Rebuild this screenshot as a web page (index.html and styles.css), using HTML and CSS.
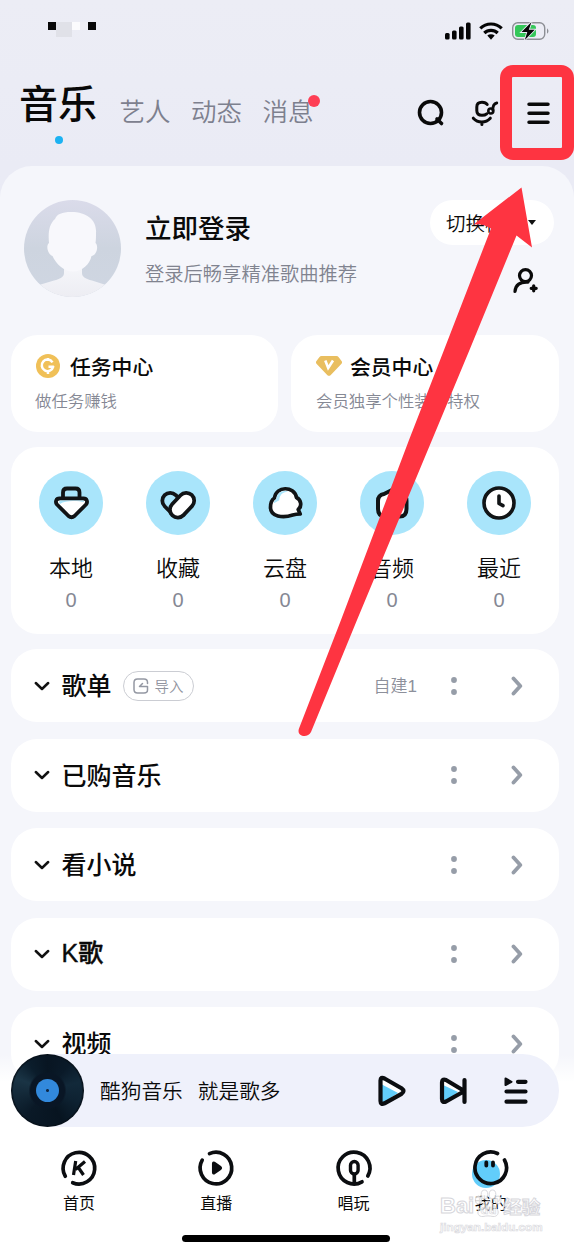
FILE: index.html
```html
<!DOCTYPE html>
<html lang="zh-CN">
<head>
<meta charset="utf-8">
<title>音乐</title>
<link rel="stylesheet" href="styles.css">
</head>
<body>
<svg class="defs" width="0" height="0">
  <symbol id="down" viewBox="0 0 16 10"><path d="M1.800 2 8 8l6.200-6" fill="none" stroke="#111" stroke-width="2.500" stroke-linecap="round" stroke-linejoin="round"/></symbol>
  <symbol id="more" viewBox="0 0 8 20"><circle cx="4" cy="4" r="2.900"/><circle cx="4" cy="16" r="2.900"/></symbol>
  <symbol id="next" viewBox="0 0 12 20"><path d="M2.500 2.500 9.300 10l-6.800 7.500" fill="none" stroke="#969da8" stroke-width="3.800" stroke-linecap="round" stroke-linejoin="round"/></symbol>
</svg>
<div class="phone">
  <div class="status">
    <div class="mosaic"><i class="blk"></i><i class="gry"></i><i class="wht"></i><i class="pale"></i><i class="blk"></i></div>
    <svg class="status-icons" width="106" height="20" viewBox="0 0 106 20">
      <g fill="#050505"><rect x="0" y="12" width="4.600" height="6.500" rx="1.500"/><rect x="7" y="9.500" width="4.600" height="9" rx="1.500"/><rect x="14" y="5.500" width="4.600" height="13" rx="1.500"/><rect x="21" y="1.500" width="4.600" height="17" rx="1.500"/></g>
      <g fill="none" stroke="#050505" stroke-width="3.200"><path d="M35.300 7.300a15.500 15.500 0 0 1 21.400 0"/><path d="M39.300 12a9.600 9.600 0 0 1 13.400 0"/></g>
      <path d="M42.300 14.600a5.500 5.500 0 0 1 7.400 0L46 18.800z" fill="#050505"/>
      <rect x="67.700" y="1.700" width="32" height="16.600" rx="5" fill="none" stroke="#8d8f95" stroke-width="1.400"/>
      <rect x="70" y="4" width="21" height="12" rx="3" fill="#34c759"/>
      <path d="M102 7.200q3 2.800 0 5.600z" fill="#8d8f95"/>
      <path d="M86.500 1 76.500 11h5.800l-2.500 8L89.700 8.700h-5.900z" fill="#050505" stroke="#ebecf5" stroke-width="1.800" paint-order="stroke"/>
    </svg>
  </div>
  <header class="header">
    <nav class="tabs">
      <a class="tab active">音乐<i class="under"></i></a>
      <a class="tab">艺人</a>
      <a class="tab">动态</a>
      <a class="tab">消息<i class="badge"></i></a>
    </nav>
    <div class="tools">
      <svg width="30" height="30" viewBox="0 0 30 30" fill="none" stroke="#0a0a0a" stroke-width="3.600" stroke-linecap="round"><circle cx="15.500" cy="14.500" r="11"/><path d="m22 21 4.500 4.500"/></svg>
      <svg width="30" height="30" viewBox="0 0 30 30" fill="none" stroke="#0a0a0a" stroke-width="3" stroke-linecap="round" stroke-linejoin="round"><path d="M18.200 6.500C17 4.500 15 4.200 13 4.200Q7.800 4.200 7.800 9v3.500q0 4.800 5.200 4.800 3 0 4.700-1.500"/><path d="M4.300 20.200c4.500 5 12.500 5 17 0M12.900 24.500v2"/><circle cx="21.800" cy="13" r="2.500" stroke-width="2.600"/><path d="M23.900 12.500c-.2-4 .6-6.900 3.900-7.500" stroke-width="2.800"/></svg>
      <svg width="30" height="30" viewBox="0 0 30 30" stroke="#0a0a0a" stroke-width="3.500" stroke-linecap="round"><path d="M6 6.200h19M6 15.200h19M6 24.200h19"/></svg>
    </div>
  </header>
  <main class="sheet">
    <section class="profile">
      <svg class="avatar" width="97" height="97" viewBox="0 0 97 97">
        <defs><linearGradient id="av" x2="0" y2="1"><stop stop-color="#dadbea"/><stop offset=".5" stop-color="#cdd4df"/><stop offset="1" stop-color="#cfd6e2"/></linearGradient><linearGradient id="bd" x2="0" y2="1"><stop stop-color="#f5f6fa"/><stop offset="1" stop-color="#ececf2"/></linearGradient><clipPath id="ac"><circle cx="48.500" cy="48.500" r="48.500"/></clipPath></defs>
        <g clip-path="url(#ac)"><path fill="url(#av)" d="M0 0h97v97H0z"/><path fill="url(#bd)" d="M40 66h18v7c0 4 4 6 10 7.500L82 85l15 5v10H0V90l15-5 15-4.500C36 79 40 77 40 73z"/><path fill="#f8f8fc" d="M25 43c-1-10 0-19 6-24 2-5 7-7 16-7 17 0 26 9 25 21 0 4 0 7-.5 10 3 2 2 12-4 13C66 64 58 71.500 49 71.500S32 64 28.500 56C23 54 22 45 25 43z"/></g>
      </svg>
      <div class="intro"><h1>立即登录</h1><p>登录后畅享精准歌曲推荐</p></div>
      <div class="side">
        <button class="mode">切换模式<i></i></button>
        <svg width="28" height="28" viewBox="0 0 28 28" fill="none" stroke="#0a0a0a" stroke-width="3.200" stroke-linecap="round" stroke-linejoin="round"><circle cx="14.500" cy="8.600" r="6"/><path d="M17 15.200C9 14.500 4.500 18 4 24.500M22.700 18.800v5M20.200 21.300h5"/></svg>
      </div>
    </section>
    <section class="centers">
      <div class="center">
        <h2><svg width="26" height="26" viewBox="0 0 26 26"><circle cx="13" cy="13" r="12" fill="#f0c058"/><path d="M17.500 9.300A5.800 5.800 0 1 0 18.200 13.700H13.500M13 5v3M13 18v3" fill="none" stroke="#fff" stroke-width="2.500" stroke-linejoin="round"/></svg>任务中心</h2>
        <p>做任务赚钱</p>
      </div>
      <div class="center">
        <h2><svg width="27" height="26" viewBox="0 0 27 26"><path d="M5.500 3h15q1.300 0 2.200 1.200l3 4q.8 1.300-.2 2.500L14.800 22q-1.800 1.700-3.600 0L.5 10.700q-1-1.200-.2-2.500l3-4q.9-1.200 2.200-1.200z" fill="#e9be5f"/><path d="m9.300 7.500 2.900 7.500L17 7.500" fill="none" stroke="#fff" stroke-width="2.600"/></svg>会员中心</h2>
        <p>会员独享个性装扮特权</p>
      </div>
    </section>
    <section class="library">
      <div class="entry"><svg viewBox="0 0 64 64"><circle cx="32" cy="32" r="32" fill="#a9e5fb"/><g stroke="#111416" stroke-width="3.800" stroke-linejoin="round"><path d="M24 27v-5.500q0-4 4-4h8.500q4 0 4 4V27" fill="#a9e5fb"/><path d="M20.500 27.500h24c3.500 0 4.500 3.500 2.500 6L35.500 45q-3 2.500-6 0L18 33.500c-2-2.500-1-6 2.500-6z" fill="#fff"/></g><path d="M21 29.400h23q1.500 0 .8 1.600c-4-.8-18-2.500-23.800 2-1-1.200-1.500-3 0-3.600z" fill="#a9e5fb"/></svg><b>本地</b><span>0</span></div>
      <div class="entry"><svg viewBox="0 0 64 64" stroke-linecap="round"><circle cx="32" cy="32" r="32" fill="#a9e5fb"/><path d="m24.200 29.700 8 8" stroke="#111416" stroke-width="19.500"/><path d="m24.200 29.700 8 8" stroke="#a9e5fb" stroke-width="12"/><path d="m40.300 29.700-8.500 9" stroke="#111416" stroke-width="19.500"/><path d="m40.300 29.700-8.500 9" stroke="#fff" stroke-width="12"/></svg><b>收藏</b><span>0</span></div>
      <div class="entry"><svg viewBox="0 0 64 64"><circle cx="32" cy="32" r="32" fill="#a9e5fb"/><path d="M21.500 27C23 15 41 14.500 43.500 26.500 48.500 29 49 35.500 45.200 38.500l2 4.500c-3 0-5 .3-7.500 1-10 3.500-22.200 1.500-22.200-7.500 0-4 1.500-8 4-9.500z" fill="#fff" stroke="#111416" stroke-width="3.700" stroke-linejoin="round"/><path d="M23.300 28.200c.5-7 7-9.500 12-7.500-6-.2-9 4-9 8.500l-5.500 3c0-2 1-3.200 2.500-4z" fill="#a9e5fb"/></svg><b>云盘</b><span>0</span></div>
      <div class="entry"><svg viewBox="0 0 64 64"><circle cx="32" cy="32" r="32" fill="#a9e5fb"/><path d="M24 23 34 18l6 5q6.500 1 6.500 7v8q0 7.500-7 7.500h-14q-7.500 0-7.500-7.500v-8q0-6 6-7z" fill="#fff" stroke="#111416" stroke-width="4" stroke-linejoin="round"/></svg><b>音频</b><span>0</span></div>
      <div class="entry"><svg viewBox="0 0 64 64"><circle cx="32" cy="32" r="32" fill="#a9e5fb"/><circle cx="32" cy="32" r="15" fill="#fff" stroke="#111416" stroke-width="3.600"/><path d="M32 25v7.500l4 2.200" fill="none" stroke="#111416" stroke-width="3.600" stroke-linecap="round" stroke-linejoin="round"/></svg><b>最近</b><span>0</span></div>
    </section>
    <section class="row"><svg class="down"><use href="#down"/></svg><h3>歌单</h3>
      <button class="import"><svg width="16" height="16" viewBox="0 0 16 16" fill="none" stroke="#9498a3" stroke-width="1.500" stroke-linecap="round" stroke-linejoin="round"><path d="M14.500 5.500V4.500Q14.500 1 11 1h-6.500Q1 1 1 4.500v7Q1 15 4.500 15H11q3.500 0 3.500-3V8.500H6.500M9.500 5.500 6.500 8.500"/></svg>导入</button>
      <span class="note">自建1</span><svg class="more"><use href="#more"/></svg><svg class="next"><use href="#next"/></svg></section>
    <section class="row"><svg class="down"><use href="#down"/></svg><h3>已购音乐</h3><svg class="more"><use href="#more"/></svg><svg class="next"><use href="#next"/></svg></section>
    <section class="row"><svg class="down"><use href="#down"/></svg><h3>看小说</h3><svg class="more"><use href="#more"/></svg><svg class="next"><use href="#next"/></svg></section>
    <section class="row"><svg class="down"><use href="#down"/></svg><h3 class="mixed">K歌</h3><svg class="more"><use href="#more"/></svg><svg class="next"><use href="#next"/></svg></section>
    <section class="row"><svg class="down"><use href="#down"/></svg><h3>视频</h3><svg class="more"><use href="#more"/></svg><svg class="next"><use href="#next"/></svg></section>
  </main>
  <footer class="dock">
    <div class="player">
      <div class="disc"><i></i></div>
      <span class="song">酷狗音乐</span><span>就是歌多</span>
      <div class="controls">
        <svg width="30" height="32" viewBox="0 0 30 32"><path d="M3.500 6v20q0 4 4 2.500l17.500-9.500q4-3 0-6L7.500 3.500Q3.500 2 3.500 6z" fill="#fff"/><path d="M4 9l17 9L7 27H4z" fill="#62cdfa"/><path d="M3.500 5.500v20.500q0 4 4 2.300l17-9.500q4-2.800 0-5.600L7.500 3.500Q3.500 1.500 3.500 5.500z" fill="none" stroke="#0b0d10" stroke-width="4.200" stroke-linejoin="round"/></svg>
        <svg width="30" height="32" viewBox="0 0 30 32"><path d="M3 8v16q0 4 4 2.500L24 16 7 5.500Q3 4 3 8z" fill="#fff"/><path d="M4 10l15 7-12 9-3-1z" fill="#62cdfa"/><path d="M3 7.500v16.500q0 4 4 2.500L22 18q3-2 0-4L7 5Q3 3.500 3 7.500zM25.500 5v22" fill="none" stroke="#0b0d10" stroke-width="4.200" stroke-linejoin="round" stroke-linecap="round"/></svg>
        <svg width="30" height="32" viewBox="0 0 30 32"><path d="M4.500 3.500 10.500 6.800l-6 3.200z" fill="#0b0d10" stroke="#0b0d10" stroke-width="2" stroke-linejoin="round"/><path d="M17 6.800h7.500M5.500 16.500h19M5.500 26.700h19" stroke="#0b0d10" stroke-width="4.200" stroke-linecap="round"/></svg>
      </div>
    </div>
    <nav class="bottom">
      <a><svg viewBox="0 0 40 40"><path d="M6.300 28.200A15.800 15.800 0 1 1 13.700 34.700" fill="none" stroke="#0b0d10" stroke-width="3.700" stroke-linecap="round"/><path d="m16.700 13-2.200 14M26 13.500l-9.500 8M19 19l5.500 8" fill="none" stroke="#0b0d10" stroke-width="3.200"/></svg>首页</a>
      <a><svg viewBox="0 0 40 40"><path d="M13.500 5.600A15.800 15.800 0 1 1 6.200 12.200" fill="none" stroke="#0b0d10" stroke-width="3.700" stroke-linecap="round"/><path d="M17.200 15.500v9q0 1 1 .7l6-4.200q1.300-1 0-2l-6-4.200q-1-.5-1 .7z" fill="#0b0d10" stroke="#0b0d10" stroke-width="2.500"/></svg>直播</a>
      <a><svg viewBox="0 0 40 40"><path d="M33.800 28A15.900 15.900 0 1 0 28 33.800M20.300 34.500V26" fill="none" stroke="#0b0d10" stroke-width="3.700" stroke-linecap="round"/><rect x="16.500" y="13.500" width="7.600" height="12.500" rx="3.800" fill="#fff" stroke="#0b0d10" stroke-width="3.400"/></svg>唱玩</a>
      <a><svg viewBox="0 0 40 40"><circle cx="15" cy="26" r="14" fill="#62cdfa"/><path d="M26.500 5.500A15.800 15.800 0 1 0 33.500 12" fill="none" stroke="#0b0d10" stroke-width="3.700" stroke-linecap="round"/><path d="M15.300 14.500v3M22 14.500v3" stroke="#0b0d10" stroke-width="3.800" stroke-linecap="round"/></svg>我的</a>
    </nav>
    <i class="home"></i>
  </footer>
  <div class="watermark">
    <div class="brand"><span class="latin">Bai</span><svg width="28" height="30" viewBox="0 0 28 30" fill="#fff" stroke="#d3d3d8" stroke-width="1"><ellipse cx="4.500" cy="11" rx="3.200" ry="4"/><ellipse cx="10.500" cy="5.500" rx="3.300" ry="4.500"/><ellipse cx="18.500" cy="5.500" rx="3.300" ry="4.500"/><ellipse cx="24" cy="11" rx="3.200" ry="4"/><path d="M14 12c4 0 6 5 9 8 3 4 0 8-4 7.500-4-.8-6-.8-10 0C4.500 28 2.500 24 5 20c3-3 5-8 9-8z" fill-opacity=".5"/><text x="6.500" y="25" class="du">du</text></svg><span class="cn">经验</span></div>
    <div class="url">jingyan.baidu.com</div>
  </div>
  <div class="frame"></div>
  <svg class="arrow" width="574" height="760" viewBox="0 0 574 760"><path d="M521.500 187.500 473.500 224.500Q482 223 491 228.500L444 350 409 440 341 620 299 728.500C296 737 308 738.500 311 732L357 620 432 440 469.500 350 516.500 235.500 532 247.500z" fill="#fe3441"/></svg>
</div>
</body>
</html>
```
FILE: styles.css
```css
* { box-sizing: border-box; }
body { margin: 0; font-family: "Noto Sans CJK SC", sans-serif; color: #0a0a0a; }
h1, h2, h3, p { margin: 0; }
button { font: inherit; border: 0; padding: 0; color: inherit; }
svg { display: block; flex: none; }
.defs { position: absolute; }
.phone { position: relative; width: 574px; height: 1246px; overflow: hidden; background: linear-gradient(180deg, #ecedf5, #eaebf5 166px, #e9eaf5); }

.status { display: flex; justify-content: space-between; height: 60px; padding: 21px 23px 0 48px; }
.mosaic { display: flex; margin-top: 1px; }
.mosaic i { width: 8px; height: 8px; }
.mosaic .blk { background: #080808; }
.mosaic .gry { width: 16px; height: 15px; background: #e0e1e8; }
.mosaic .wht { background: #fbfbfd; }
.mosaic .pale { background: #efeff5; }

.header { display: flex; justify-content: space-between; height: 106px; padding: 16px 21px 0 19px; }
.tabs { display: flex; height: 64px; }
.tab { position: relative; font-size: 25.500px; line-height: 67px; color: #7d808e; margin-right: 20.500px; font-weight: 350; }
.tab.active { font-size: 39px; line-height: 51px; color: #080808; font-weight: 500; margin-right: 22.500px; }
.under { position: absolute; left: 35.500px; top: 60px; width: 8px; height: 8px; border-radius: 50%; background: #1cb2f2; }
.badge { position: absolute; right: -6px; top: 19px; width: 12px; height: 12px; border-radius: 50%; background: #fe3f55; }
.tools { display: flex; gap: 24px; padding-top: 22px; }

.sheet { height: 1080px; padding: 0 15px 0 11px; border-radius: 32px 32px 0 0; background: #f5f6fb; }
.profile { display: flex; height: 168.500px; padding: 34px 0 0 13px; }
.intro { margin-left: 24px; }
.intro h1 { font-size: 26.500px; line-height: 40px; font-weight: 500; margin-top: 7px; }
.intro p { font-size: 19.300px; line-height: 28px; margin-top: 12px; color: #80838f; font-weight: 350; }
.side { display: flex; flex-direction: column; align-items: flex-end; margin: 0 5px 0 auto; gap: 22px; }
.side svg { margin-right: 15px; }
.mode { display: flex; align-items: center; gap: 4px; width: 124px; height: 45px; padding-left: 16px; border-radius: 23px; background: #fff; font-size: 19.500px; font-weight: 350; }
.mode i { border: 4.500px solid transparent; border-top: 5px solid #111; border-bottom: 0; }

.centers { display: flex; gap: 13px; height: 97px; }
.center { flex: 1; padding: 17px 0 0 24px; border-radius: 27px; background: #fff; }
.center h2 { display: flex; align-items: center; gap: 9px; height: 29px; font-size: 20.800px; font-weight: 450; }
.center p { margin-top: 7px; font-size: 16.400px; line-height: 24px; color: #858894; font-weight: 350; }

.center + .center { padding-left: 25px; }
.center + .center h2 { gap: 7px; }

.library { display: flex; height: 187px; margin-top: 15px; padding: 24px 6.500px 0; border-radius: 27px; background: #fff; }
.entry { display: flex; flex: 1; flex-direction: column; align-items: center; }
.entry svg { width: 64px; height: 64px; }
.entry b { margin-top: 16px; font-size: 22px; line-height: 30px; font-weight: 350; }
.entry span { margin-top: 5px; font: 20px/28px "Liberation Sans", sans-serif; color: #858894; }

.row { display: flex; align-items: center; height: 73px; margin-top: 16.500px; padding: 0 36px 0 23px; border-radius: 26px; background: #fff; }
.library + .row { margin-top: 15.500px; }
.down { width: 16px; height: 10px; }
.row h3 { margin: -3px 0 0 11.500px; font-size: 25px; line-height: 36px; font-weight: 500; }
.row .mixed { font-family: "Liberation Sans", "Noto Sans CJK SC", sans-serif; -webkit-text-stroke: .4px #0a0a0a; }
.more { width: 8px; height: 20px; margin-left: auto; fill: #969da8; }
.next { width: 12px; height: 20px; margin-left: 53px; }
.import { display: flex; align-items: center; justify-content: center; gap: 6px; width: 71px; height: 30px; margin-left: 11px; border: 1.500px solid #cbcdd3; border-radius: 15px; background: #fff; color: #9194a0; font-size: 14.500px; line-height: 20px; font-weight: 350; }
.note { margin: -2px 0 0 auto; font-family: "Liberation Sans", "Noto Sans CJK SC", sans-serif; font-size: 17px; color: #8d909b; font-weight: 350; }
.note + .more { margin-left: 33px; }

.dock { position: absolute; left: 0; right: 0; bottom: 0; height: 192px; background: linear-gradient(180deg, rgba(255,255,255,0), #fff 28px); }
.player { display: flex; align-items: center; height: 73px; margin: 0 15px 0 11px; padding-right: 28px; border-radius: 37px; background: #eff1fb; font-size: 20.700px; font-weight: 350; }
.player span { margin-top: -2px; }
.disc { display: flex; align-items: center; justify-content: center; width: 73px; height: 73px; margin-right: 16px; border-radius: 50%; background: radial-gradient(circle, #091625 17px, transparent 19px, transparent 34px, #061019 36px), conic-gradient(#081522, #0a1a29 40deg, #12293a 75deg, #0e2232 110deg, #071420 155deg, #0a1927 220deg, #1a3445 292deg, #0b1d2c 325deg, #081522); }
.disc i { width: 23px; height: 23px; border-radius: 50%; background: radial-gradient(circle, #102947 1px, #3289dc 2px); }
.player .song { margin-right: 15px; }
.controls { display: flex; gap: 32px; margin-left: auto; }
.bottom { display: flex; height: 95px; padding: 21px 14.500px 0 10.500px; }
.bottom a { display: flex; flex: 1; flex-direction: column; align-items: center; font-size: 16px; line-height: 24px; }
.bottom svg { width: 40px; height: 40px; margin-bottom: 2px; overflow: visible; }
.home { display: block; width: 208px; height: 7px; margin: 13px 0 0 182px; border-radius: 4px; background: #000; }

.watermark { position: absolute; left: 440px; top: 1186px; width: 106px; opacity: .85; color: #fff; }
.brand { display: flex; align-items: flex-end; height: 33px; }
.latin { font: 700 22px/27px "Liberation Sans", sans-serif; -webkit-text-stroke: 1px #d0d0d6; }
.cn { font-size: 18.500px; line-height: 25px; font-weight: 700; margin-left: 1px; -webkit-text-stroke: 1px #d0d0d6; }
.du { font: 700 13px "Liberation Sans", sans-serif; stroke-width: .7px; }
.url { font: 700 11.700px/15px "Liberation Sans", sans-serif; -webkit-text-stroke: .7px #d5d5da; }
.frame { position: absolute; left: 500px; top: 65px; width: 73.500px; height: 95px; border: 12px solid #fe3441; border-radius: 13px; }
.arrow { position: absolute; left: 0; top: 0; }
```
